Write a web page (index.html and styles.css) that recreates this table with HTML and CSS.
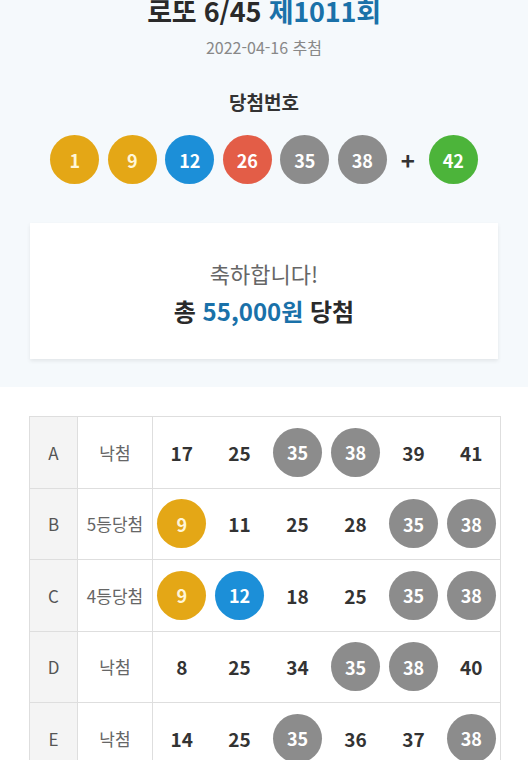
FILE: index.html
```html
<!DOCTYPE html>
<html lang="ko">
<head>
<meta charset="utf-8">
<link rel="stylesheet" href="styles.css">
</head>
<body>
<section class="top">
  <h1 class="title">로또 6/45 <span class="round">제1011회</span></h1>
  <p class="date">2022-04-16 추첨</p>
  <h2 class="label">당첨번호</h2>
  <div class="balls">
    <span class="ball y">1</span>
    <span class="ball y">9</span>
    <span class="ball b">12</span>
    <span class="ball r">26</span>
    <span class="ball g">35</span>
    <span class="ball g">38</span>
    <span class="plus">+</span>
    <span class="ball gr">42</span>
  </div>
  <div class="card">
    <p class="congrats">축하합니다!</p>
    <p class="total">총 <span class="amount">55,000원</span> 당첨</p>
  </div>
</section>
<section class="result">
  <table class="grid">
    <colgroup><col class="c-key"><col class="c-rank"><col class="c-n"><col class="c-n"><col class="c-n"><col class="c-n"><col class="c-n"><col class="c-n"></colgroup>
    <tr>
      <td class="key">A</td><td class="rank">낙첨</td>
      <td>17</td><td>25</td><td><span class="ball sm g">35</span></td><td><span class="ball sm g">38</span></td><td>39</td><td>41</td>
    </tr>
    <tr>
      <td class="key">B</td><td class="rank">5등당첨</td>
      <td><span class="ball sm y">9</span></td><td>11</td><td>25</td><td>28</td><td><span class="ball sm g">35</span></td><td><span class="ball sm g">38</span></td>
    </tr>
    <tr>
      <td class="key">C</td><td class="rank">4등당첨</td>
      <td><span class="ball sm y">9</span></td><td><span class="ball sm b">12</span></td><td>18</td><td>25</td><td><span class="ball sm g">35</span></td><td><span class="ball sm g">38</span></td>
    </tr>
    <tr>
      <td class="key">D</td><td class="rank">낙첨</td>
      <td>8</td><td>25</td><td>34</td><td><span class="ball sm g">35</span></td><td><span class="ball sm g">38</span></td><td>40</td>
    </tr>
    <tr>
      <td class="key">E</td><td class="rank">낙첨</td>
      <td>14</td><td>25</td><td><span class="ball sm g">35</span></td><td>36</td><td>37</td><td><span class="ball sm g">38</span></td>
    </tr>
  </table>
</section>
</body>
</html>
```
FILE: styles.css
```css
html, body {
  margin: 0;
  padding: 0;
}
body {
  font-family: "Noto Sans CJK KR", "Noto Sans", sans-serif;
  background: #ffffff;
  color: #333;
}
p, h1, h2 { margin: 0; }

.top {
  background: #f5f9fc;
  padding: 0 0 28px;
  display: flex;
  flex-direction: column;
  align-items: center;
}
.title {
  font-size: 27px;
  font-weight: 700;
  line-height: 30px;
  margin-top: -4px;
  color: #2a2a2a;
  letter-spacing: -0.2px;
}
.round { color: #1a71a9; }
.date {
  margin-top: 10px;
  font-size: 16px;
  line-height: 22px;
  color: #888;
}
.label {
  margin-top: 31px;
  font-size: 19px;
  font-weight: 700;
  line-height: 26px;
  color: #333;
}
.balls {
  margin-top: 20px;
  display: flex;
  align-items: center;
  gap: 8.5px;
}
.ball {
  width: 49px;
  height: 49px;
  border-radius: 50%;
  display: inline-flex;
  align-items: center;
  justify-content: center;
  color: #fff;
  font-size: 18px;
  font-weight: 700;
}
.y { background: #e4a716; color: #fff6d8; }
.b { background: #1c8fd8; }
.r { background: #e35d47; }
.g { background: #8c8c8c; }
.gr { background: #4cb43a; }
.plus {
  width: 25px;
  text-align: center;
  font-size: 24px;
  font-weight: 700;
  color: #333;
}
.card {
  margin-top: 39px;
  width: 468px;
  height: 136px;
  background: #fff;
  box-shadow: 0 2px 4px rgba(0,0,0,0.08);
  display: flex;
  flex-direction: column;
  align-items: center;
  justify-content: center;
  gap: 6px;
  box-sizing: border-box;
  padding-top: 2px;
}
.congrats {
  font-size: 22px;
  line-height: 32px;
  color: #666;
  font-weight: 400;
}
.total {
  font-size: 24px;
  line-height: 32px;
  font-weight: 700;
  color: #2a2a2a;
}
.amount { color: #1a71a9; }

.result {
  padding: 29px 28px 0 29px;
}
.grid {
  width: 471px;
  border-collapse: collapse;
  table-layout: fixed;
}
.c-key { width: 48px; }
.c-rank { width: 75px; }
.c-n { width: 58px; }
.grid td {
  height: 70.5px;
  padding: 0;
  border: 1px solid #dedede;
  text-align: center;
  vertical-align: middle;
  font-size: 19px;
  font-weight: 700;
  color: #333;
}
.grid td:nth-child(n+4) { border-left: none; }
.grid td:nth-child(n+3):not(:last-child) { border-right: none; }
.grid td.key {
  background: #f4f4f4;
  font-size: 17px;
  font-weight: 400;
  color: #555;
}
.grid td.rank {
  font-size: 17px;
  font-weight: 400;
  color: #666;
}
.ball.sm {
  width: 49px;
  height: 49px;
  vertical-align: middle;
}
```
